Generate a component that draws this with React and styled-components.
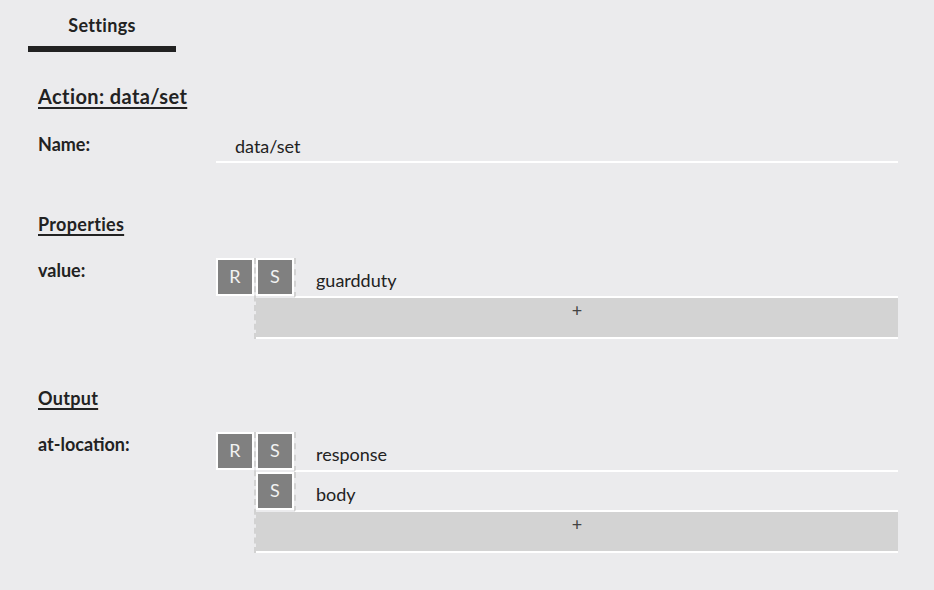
import styled, { createGlobalStyle } from "styled-components";

const GlobalStyle = createGlobalStyle`
  body {
    margin: 0;
    background-color: #ebebed;
    font-family: Lato, "Noto Sans", sans-serif;
    color: #222;
  }
`;

const Page = styled.div`
  padding: 0 36px 40px 28px;
`;

const Tabs = styled.div`
  display: flex;
`;

const Tab = styled.div`
  width: 148px;
  padding: 14px 0 10px;
  line-height: 22px;
  font-size: 18px;
  font-weight: 700;
  letter-spacing: 0.3px;
  text-align: center;
  border-bottom: 6px solid #222;
`;

const Content = styled.div`
  padding-left: 10px;
`;

const Heading = styled.h2`
  margin: ${props => props.gap}px 0 0;
  font-size: ${props => (props.main ? 20 : 18)}px;
  line-height: 24px;
  font-weight: 700;
  letter-spacing: ${props => (props.main ? 0.4 : 0.3)}px;
  text-decoration: underline;
  text-underline-offset: 3px;
  text-decoration-thickness: 2px;
`;

const Row = styled.div`
  display: grid;
  grid-template-columns: 178px 1fr;
  margin-top: ${props => props.gap}px;
`;

const Label = styled.div`
  font-size: 18px;
  font-weight: 700;
  line-height: 24px;
  padding-top: ${props => props.offset || 0}px;
`;

const TextField = styled.div`
  padding: 10px 0 3px 19px;
  font-size: 18px;
  line-height: 24px;
  border-bottom: 2px solid #fff;
`;

const Field = styled.div`
  display: flex;
  align-items: flex-start;
`;

const Tag = styled.div`
  width: 34px;
  height: 34px;
  flex: none;
  border: 2px solid #fff;
  background-color: #808080;
  color: #f2f2f2;
  font-size: 18px;
  line-height: 32px;
  text-align: center;
`;

const List = styled.div`
  flex: 1;
  border-left: 2px dashed #d2d2d2;
`;

const Item = styled.div`
  display: flex;
  height: 40px;
`;

const ItemValue = styled.div`
  flex: 1;
  height: 38px;
  padding-left: 20px;
  font-size: 18px;
  line-height: 44px;
  border-left: 2px dashed #d2d2d2;
  border-bottom: 2px solid #fff;
`;

const AddButton = styled.div`
  height: 39px;
  background-color: #d3d3d3;
  border-bottom: 2px solid #fff;
  text-align: center;
  font-size: 18px;
  line-height: 24px;
  color: #444;
`;

function ListField({ items }) {
  return (
    <Field>
      <Tag>R</Tag>
      <List>
        {items.map(item => (
          <Item key={item}>
            <Tag>S</Tag>
            <ItemValue>{item}</ItemValue>
          </Item>
        ))}
        <AddButton>+</AddButton>
      </List>
    </Field>
  );
}

export default function App() {
  return (
    <>
      <GlobalStyle />
      <Page>
        <Tabs>
          <Tab>Settings</Tab>
        </Tabs>
        <Content>
          <Heading main gap={32}>Action: data/set</Heading>
          <Row gap={16}>
            <Label offset={8}>Name:</Label>
            <TextField>data/set</TextField>
          </Row>

          <Heading gap={49}>Properties</Heading>
          <Row gap={22}>
            <Label>value:</Label>
            <ListField items={["guardduty"]} />
          </Row>

          <Heading gap={47}>Output</Heading>
          <Row gap={22}>
            <Label>at-location:</Label>
            <ListField items={["response", "body"]} />
          </Row>
        </Content>
      </Page>
    </>
  );
}
